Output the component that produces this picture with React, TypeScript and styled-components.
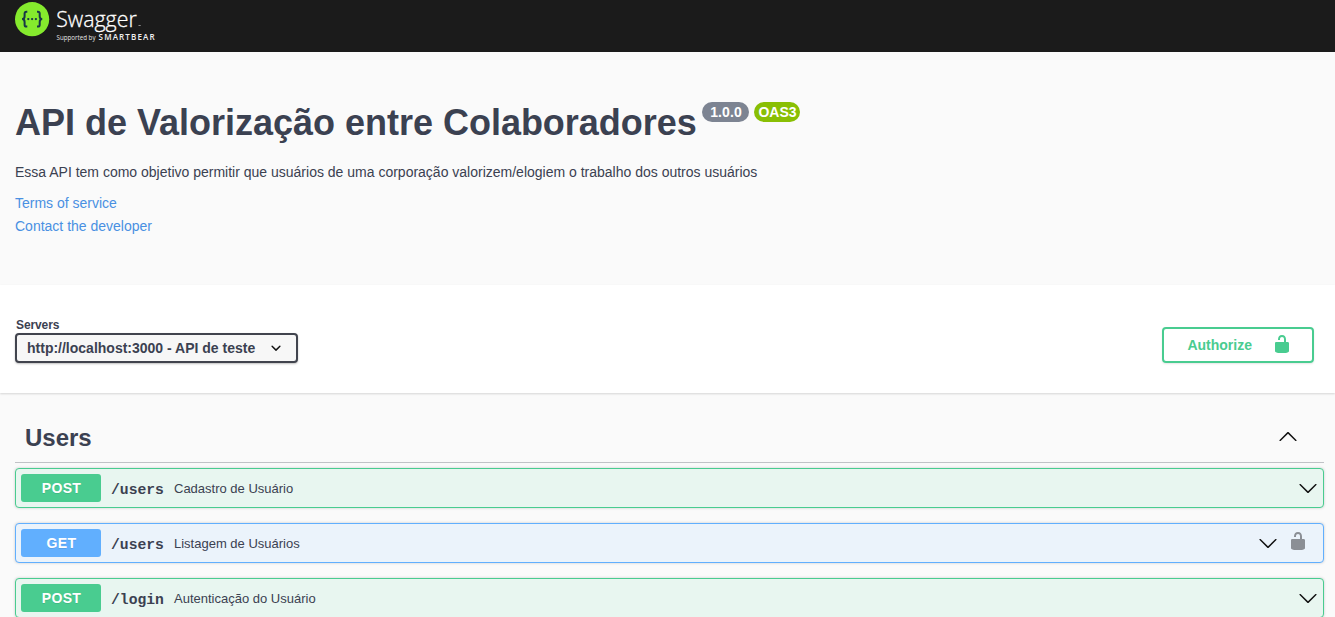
import React from "react";
import styled, { createGlobalStyle } from "styled-components";

const GlobalStyle = createGlobalStyle`
  *, *::before, *::after { box-sizing: border-box; }
  html, body { margin: 0; padding: 0; }
  body {
    height: 617px;
    overflow: hidden;
    background: #fafafa;
    color: #3b4151;
    font-family: "Liberation Sans", Arial, sans-serif;
  }
`;

const Topbar = styled.header`
  height: 52px;
  padding: 2px 15px 0;
  background: #1b1b1b;
  display: flex;
  align-items: flex-start;
`;

const Logo = styled.svg`
  display: block;
  width: 150px;
  height: 44px;
`;

const Info = styled.section`
  height: 233px;
  padding: 50px 15px 0;
`;

const TitleRow = styled.div`
  display: flex;
  align-items: flex-start;
`;

const Title = styled.h1`
  margin: 0;
  font-size: 36px;
  line-height: 41px;
  font-weight: 700;
  width: 687px;
  letter-spacing: -0.01px;
  white-space: nowrap;
`;

const Pill = styled.span<{ $color: string; $width: number; $spacing?: string }>`
  width: ${(p) => p.$width}px;
  height: 20px;
  margin-right: 5px;
  padding-left: 1px;
  border-radius: 10px;
  background: ${(p) => p.$color};
  color: #fff;
  font-size: 14px;
  font-weight: 700;
  line-height: 20px;
  letter-spacing: ${(p) => p.$spacing ?? "0"};
  text-align: center;
`;

const Description = styled.p`
  margin: 21px 0 15px;
  font-size: 14px;
  line-height: 16px;
`;

const InfoLink = styled.a`
  display: block;
  width: max-content;
  margin-bottom: 7px;
  font-size: 14px;
  line-height: 16px;
  color: #4990e2;
  text-decoration: none;
`;

const SchemeBar = styled.section`
  height: 108px;
  padding: 33px 21px 0 15px;
  background: #fff;
  box-shadow: 0 1px 2px 0 rgba(0, 0, 0, 0.15);
  display: flex;
  justify-content: space-between;
  align-items: flex-start;
`;

const ServerField = styled.div`
  display: flex;
  flex-direction: column;
`;

const ServerLabel = styled.span`
  padding-left: 1px;
  font-size: 12px;
  font-weight: 700;
  line-height: 14px;
  margin-bottom: 1px;
  letter-spacing: -0.1px;
`;

const Select = styled.button`
  width: 283px;
  height: 30px;
  padding: 0 10px;
  border: 2px solid #41444e;
  border-radius: 4px;
  background: #f7f7f7;
  box-shadow: 0 1px 2px 0 rgba(0, 0, 0, 0.25);
  display: flex;
  align-items: center;
  justify-content: space-between;
  color: #3b4151;
  font: 700 14px/16px "Liberation Sans", Arial, sans-serif;
`;

const AuthorizeButton = styled.button`
  width: 152px;
  height: 36px;
  margin-top: 9px;
  padding: 0 20px 2px 23.4px;
  border: 2px solid #49cc90;
  border-radius: 4px;
  background: transparent;
  box-shadow: 0 1px 2px rgba(0, 0, 0, 0.1);
  display: flex;
  align-items: center;
  justify-content: space-between;
  color: #49cc90;
  font: 700 14px/16px "Liberation Sans", Arial, sans-serif;
`;

const AuthorizeLabel = styled.span`
  padding-top: 2px;
`;

const Operations = styled.main`
  padding: 20px 11px 0 15px;
`;

const TagHeader = styled.div`
  height: 50px;
  margin-bottom: 5px;
  padding: 0 26px 2px 10px;
  border-bottom: 1px solid rgba(59, 65, 81, 0.3);
  display: flex;
  align-items: center;
  justify-content: space-between;
`;

const TagName = styled.h2`
  margin: 0;
  padding-top: 2px;
  font-size: 24px;
  line-height: 28px;
`;

const methodColors = {
  POST: { main: "#49cc90", fill: "#e8f6f0" },
  GET: { main: "#61affe", fill: "#ebf3fb" },
};

type Method = keyof typeof methodColors;

const OperationRow = styled.div<{ $method: Method }>`
  height: 40px;
  margin-bottom: 15px;
  padding: 0 5px;
  border: 1px solid ${(p) => methodColors[p.$method].main};
  border-radius: 4px;
  background: ${(p) => methodColors[p.$method].fill};
  box-shadow: 0 0 3px rgba(0, 0, 0, 0.19);
  display: flex;
  align-items: center;
`;

const MethodBadge = styled.span<{ $method: Method }>`
  width: 80px;
  height: 28px;
  border-radius: 3px;
  background: ${(p) => methodColors[p.$method].main};
  color: #fff;
  font-size: 14px;
  font-weight: 700;
  line-height: 28px;
  letter-spacing: 0.35px;
  padding-left: 1px;
  text-align: center;
  text-shadow: 0 1px 0 rgba(0, 0, 0, 0.1);
`;

const Path = styled.span`
  width: 53px;
  margin: 4px 10px 0;
  font: 700 14.7px/18px "Liberation Mono", monospace;
`;

const Summary = styled.span`
  flex: 1;
  font-size: 13px;
  line-height: 15px;
`;

const RowIcons = styled.span`
  display: flex;
  align-items: center;
  gap: 10px;
`;

const LockSlot = styled.span`
  display: flex;
  margin: -4px 10px 0 0;
  color: #8b8f95;
`;

const Icon = styled.svg<{ $flip?: boolean }>`
  display: block;
  flex: none;
  width: 20px;
  height: 20px;
  fill: currentColor;
  transform: ${(p) => (p.$flip ? "rotate(180deg)" : "none")};
`;

const ArrowWrap = styled.span`
  display: flex;
  color: #111;
`;

function Arrow({ up }: { up?: boolean }) {
  return (
    <ArrowWrap>
      <Icon viewBox="0 0 20 20" $flip={up}>
        <path d="M17.418 6.109c.272-.268.709-.268.979 0s.271.701 0 .969l-7.908 7.83c-.27.268-.707.268-.979 0l-7.908-7.83c-.27-.268-.27-.701 0-.969.271-.268.709-.268.979 0L10 13.25l7.418-7.141z" />
      </Icon>
    </ArrowWrap>
  );
}

function SmallArrow() {
  return (
    <ArrowWrap>
      <Icon viewBox="0 0 20 20">
        <path d="M13.418 7.859a.695.695 0 01.978 0 .68.68 0 010 .969l-3.908 3.83a.697.697 0 01-.979 0l-3.908-3.83a.68.68 0 010-.969.695.695 0 01.978 0L10 11l3.418-3.141z" />
      </Icon>
    </ArrowWrap>
  );
}

function Unlocked() {
  return (
    <Icon viewBox="0 0 20 20">
      <path d="M15.8 8H14V5.6C14 2.703 12.665 1 10 1 7.334 1 6 2.703 6 5.6V6h2v-.801C8 3.754 8.797 3 10 3c1.203 0 2 .754 2 2.199V8H4c-.553 0-1 .646-1 1.199V17c0 .549.428 1.139.951 1.307l1.197.387C5.672 18.861 6.55 19 7.1 19h5.8c.549 0 1.428-.139 1.951-.307l1.196-.387c.524-.167.953-.757.953-1.306V9.199C17 8.646 16.352 8 15.8 8z" />
    </Icon>
  );
}

function SwaggerLogo() {
  return (
    <Logo viewBox="0 0 150 44">
      <circle cx="17.1" cy="17.2" r="17.1" fill="#85ea2d" />
      <g fill="none" stroke="#173647" strokeWidth="2">
        <path d="M12.3 9.7H11.4Q9.6 9.7 9.6 11.6V14.2Q9.6 17 7.1 17.1Q9.6 17.2 9.6 20V22.7Q9.6 24.6 11.4 24.6H12.3" />
        <path d="M22 9.7H22.9Q24.7 9.7 24.7 11.6V14.2Q24.7 17 27.2 17.1Q24.7 17.2 24.7 20V22.7Q24.7 24.6 22.9 24.6H22" />
      </g>
      <g fill="#173647">
        <circle cx="13.3" cy="17.1" r="1.15" />
        <circle cx="17.1" cy="17.1" r="1.15" />
        <circle cx="20.9" cy="17.1" r="1.15" />
      </g>
      <text x="41.2" y="24.6" fill="#fff" stroke="#fff" strokeWidth="0.3" fontFamily="'Open Sans', sans-serif" fontSize="22.6" fontWeight="300" textLength="80.5" lengthAdjust="spacingAndGlyphs">Swagger</text>
      <rect x="123.5" y="23" width="2.2" height="0.8" fill="#aaa" />
      <text x="41.5" y="38.4" fill="#e6e6e6" fontFamily="'Open Sans', sans-serif" fontSize="6.4" textLength="39" lengthAdjust="spacingAndGlyphs">Supported by</text>
      <text x="83.6" y="38.3" fill="#f0f0f0" fontFamily="'Open Sans', sans-serif" fontSize="8" fontWeight="600" textLength="56">SMARTBEAR</text>
    </Logo>
  );
}

const operations: { method: Method; path: string; summary: string; secured?: boolean }[] = [
  { method: "POST", path: "/users", summary: "Cadastro de Usuário" },
  { method: "GET", path: "/users", summary: "Listagem de Usuários", secured: true },
  { method: "POST", path: "/login", summary: "Autenticação do Usuário" },
];

export default function App() {
  return (
    <>
      <GlobalStyle />
      <Topbar>
        <SwaggerLogo />
      </Topbar>
      <Info>
        <TitleRow>
          <Title>API de Valorização entre Colaboradores</Title>
          <Pill $color="#7d8492" $width={47} $spacing="0.1px">1.0.0</Pill>
          <Pill $color="#89bf04" $width={46}>OAS3</Pill>
        </TitleRow>
        <Description>
          Essa API tem como objetivo permitir que usuários de uma corporação valorizem/elogiem o trabalho dos outros usuários
        </Description>
        <InfoLink>Terms of service</InfoLink>
        <InfoLink>Contact the developer</InfoLink>
      </Info>
      <SchemeBar>
        <ServerField>
          <ServerLabel>Servers</ServerLabel>
          <Select>
            http://localhost:3000 - API de teste
            <SmallArrow />
          </Select>
        </ServerField>
        <AuthorizeButton>
          <AuthorizeLabel>Authorize</AuthorizeLabel>
          <Unlocked />
        </AuthorizeButton>
      </SchemeBar>
      <Operations>
        <TagHeader>
          <TagName>Users</TagName>
          <Arrow up />
        </TagHeader>
        {operations.map((op) => (
          <OperationRow key={op.method + op.path} $method={op.method}>
            <MethodBadge $method={op.method}>{op.method}</MethodBadge>
            <Path>{op.path}</Path>
            <Summary>{op.summary}</Summary>
            <RowIcons>
              <Arrow />
              {op.secured && (
                <LockSlot>
                  <Unlocked />
                </LockSlot>
              )}
            </RowIcons>
          </OperationRow>
        ))}
      </Operations>
    </>
  );
}
